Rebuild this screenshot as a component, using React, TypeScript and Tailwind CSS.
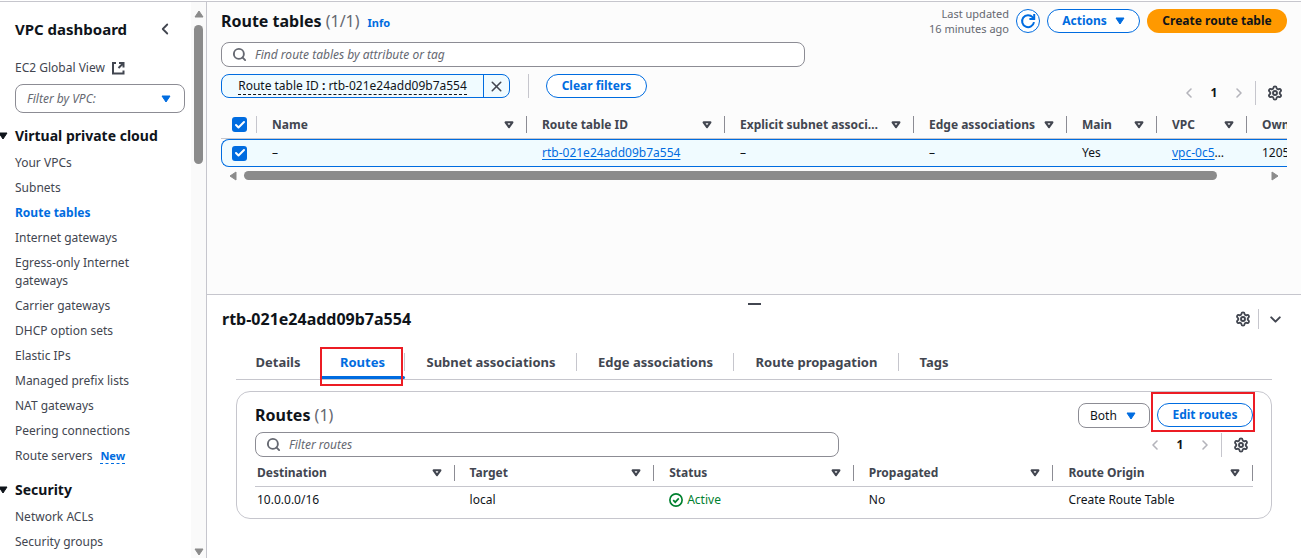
import { Settings, Search, X, ChevronLeft, ChevronRight, ChevronDown, Check } from "lucide-react";
import clsx from "clsx";

function Caret({ className }: { className?: string }) {
  return (
    <svg viewBox="0 0 10 8" className={clsx("h-2 w-2.5 shrink-0", className)} aria-hidden="true">
      <path d="M1 1h8L5 7z" fill="currentColor" stroke="currentColor" strokeLinejoin="round" />
    </svg>
  );
}

function SortIcon() {
  return (
    <svg viewBox="0 0 10 8" className="h-2 w-2.5 shrink-0" fill="none" aria-hidden="true">
      <path d="M1.6 1.3h6.8L5 6.2z" stroke="currentColor" strokeWidth="2.1" strokeLinejoin="round" />
    </svg>
  );
}

function ExternalIcon() {
  return (
    <svg viewBox="0 0 14 14" className="size-3.5" fill="none" stroke="currentColor" strokeWidth="2" aria-hidden="true">
      <path d="M5 2H2v10.5h10.5V9.5" />
      <path d="M8 2h4.5v4.5M12.5 2 7.5 7" />
    </svg>
  );
}

function RefreshIcon() {
  return (
    <svg viewBox="0 0 16 16" className="size-4" fill="none" stroke="currentColor" strokeWidth="2" aria-hidden="true">
      <path d="M14 9.2A6 6 0 1 1 12.6 4.2L14 5.6" />
      <path d="M14.2 1v5H9.4" />
    </svg>
  );
}

function StatusIcon() {
  return (
    <svg viewBox="0 0 16 16" className="size-3.5" fill="none" stroke="currentColor" strokeWidth="1.9" aria-hidden="true">
      <circle cx="8" cy="8" r="7" />
      <path d="m4.8 8.2 2.3 2.3 4.1-4.4" />
    </svg>
  );
}

function Pager() {
  return (
    <div className="flex h-6 items-center pr-1">
      <button aria-label="Previous page" className="flex w-4 justify-center text-[#b4b4bb]">
        <ChevronLeft className="size-4 shrink-0" strokeWidth={2.4} />
      </button>
      <button className="mx-[9px] w-4 text-center font-bold">1</button>
      <button aria-label="Next page" className="flex w-4 justify-center text-[#b4b4bb]">
        <ChevronRight className="size-4 shrink-0" strokeWidth={2.4} />
      </button>
      <span className="ml-2 h-6 w-px bg-[#c6c6cd]" />
      <button aria-label="Preferences" className="ml-[11px] flex w-4 justify-center text-[#424650]">
        <Settings className="size-4 shrink-0" strokeWidth={2.8} />
      </button>
    </div>
  );
}

function SearchBox({ label }: { label: string }) {
  return (
    <label className="flex h-[25px] w-full max-w-[584px] items-center gap-2 rounded-lg border border-[#8c8c94] bg-white pr-3 pl-2.5">
      <Search className="size-[15px] shrink-0 text-[#656871]" strokeWidth={3} />
      <input
        type="text"
        aria-label={label}
        placeholder={label}
        className="min-w-0 flex-1 bg-transparent outline-none placeholder:text-[#656871] placeholder:italic"
      />
    </label>
  );
}

function Tick({ label }: { label: string }) {
  return (
    <label className="ml-[11px] grid size-[15px] place-items-center">
      <input
        type="checkbox"
        defaultChecked
        aria-label={label}
        className="col-start-1 row-start-1 size-[15px] appearance-none rounded-[3px] bg-white checked:bg-[#006ce0]"
      />
      <Check className="pointer-events-none col-start-1 row-start-1 size-3 text-white" strokeWidth={4} />
    </label>
  );
}

type Item = { text: string; active?: boolean; isNew?: boolean };

function NavGroup({ title, items }: { title: string; items: Item[] }) {
  return (
    <section className="mb-4">
      <h3>
        <button className="flex items-center gap-[7px] text-[14px] leading-[18px] font-bold whitespace-nowrap">
          <Caret className="-ml-0.5" />
          {title}
        </button>
      </h3>
      <ul className="mt-[9px] flex flex-col gap-[7px] pr-12 pl-[15px]">
        {items.map((item) => (
          <li key={item.text}>
            <a href="#" className={item.active ? "font-bold text-[#006ce0]" : "text-[#424650]"}>
              {item.text}
            </a>
            {item.isNew && (
              <a href="#" className="ml-2 border-b border-dashed border-[#006ce0] text-[11px] font-bold text-[#006ce0]">
                New
              </a>
            )}
          </li>
        ))}
      </ul>
    </section>
  );
}

const vpcItems: Item[] = [
  { text: "Your VPCs" },
  { text: "Subnets" },
  { text: "Route tables", active: true },
  { text: "Internet gateways" },
  { text: "Egress-only Internet gateways" },
  { text: "Carrier gateways" },
  { text: "DHCP option sets" },
  { text: "Elastic IPs" },
  { text: "Managed prefix lists" },
  { text: "NAT gateways" },
  { text: "Peering connections" },
  { text: "Route servers", isNew: true },
];

const securityItems: Item[] = [{ text: "Network ACLs" }, { text: "Security groups" }];

function Sidebar() {
  return (
    <aside className="flex w-[207px] shrink-0 border-r border-[#c6c6cd]">
      <div className="min-w-0 flex-1 overflow-hidden pt-[17px]">
        <div className="flex items-center justify-between pr-[17px] pl-[15px]">
          <h2 className="text-[15px] leading-5 font-bold">VPC dashboard</h2>
          <button aria-label="Collapse navigation" className="text-[#424650]">
            <ChevronLeft className="size-[18px]" strokeWidth={2.4} />
          </button>
        </div>
        <a href="#" className="mt-5 flex items-center gap-1.5 pl-[15px] text-[#424650]">
          EC2 Global View <ExternalIcon />
        </a>
        <div className="mt-[7px] mb-3.5 grid pr-1.5 pl-[15px]">
          <select
            aria-label="Filter by VPC"
            className="col-start-1 row-start-1 h-[29px] appearance-none rounded-lg border border-[#8c8c94] bg-white px-[11px] text-[#656871] italic"
          >
            <option>Filter by VPC:</option>
          </select>
          <Caret className="pointer-events-none col-start-1 row-start-1 mr-3.5 self-center justify-self-end text-[#006ce0]" />
        </div>
        <NavGroup title="Virtual private cloud" items={vpcItems} />
        <NavGroup title="Security" items={securityItems} />
      </div>
      <div className="flex w-[15px] shrink-0 flex-col items-center bg-[#fafafa] pt-2 pb-0.5 text-[#8b8b8b]">
        <Caret className="rotate-180" />
        <div className="my-[7px] min-h-0 w-[9px] flex-1">
          <div className="h-[27%] rounded-full bg-[#8b8b8b]" />
        </div>
        <Caret />
      </div>
    </aside>
  );
}

const columns = ["Name", "Route table ID", "Explicit subnet associ…", "Edge associations", "Main", "VPC"];

function RouteTables() {
  return (
    <section className="min-h-0 flex-1 overflow-hidden bg-[#fcfcfc] pt-[7px] pr-3.5 pl-3.5">
      <div className="flex h-6 items-center justify-between">
        <div className="flex items-baseline">
          <h1 className="text-[16px] leading-6 font-bold">
            Route tables <span className="font-normal text-[#656871]">(1/1)</span>
          </h1>
          <a href="#" className="ml-2 text-[11px] font-bold text-[#006ce0]">
            Info
          </a>
        </div>
        <div className="flex items-center gap-[7px]">
          <p className="text-right text-[11px] leading-[15px] text-[#656871]">
            Last updated
            <br />
            16 minutes ago
          </p>
          <button
            aria-label="Refresh"
            className="grid size-6 place-items-center rounded-full border border-[#006ce0] bg-white text-[#006ce0]"
          >
            <RefreshIcon />
          </button>
          <button className="flex h-6 w-[93px] items-center justify-center gap-2 rounded-full border border-[#006ce0] bg-white font-bold text-[#006ce0]">
            Actions <Caret />
          </button>
          <button className="h-6 w-[140px] rounded-full bg-[#ff9900] font-bold">Create route table</button>
        </div>
      </div>

      <div className="mt-[9px]">
        <SearchBox label="Find route tables by attribute or tag" />
      </div>

      <div className="mt-[7px] flex h-[31px] items-start">
        <div className="flex h-6 w-[289px] items-center overflow-hidden rounded-lg border border-[#006ce0] bg-[#f0fbff]">
          <button className="flex h-full flex-1 items-center justify-center border-r border-[#006ce0]">
            <span className="border-b border-dashed border-[#0f141a] leading-[17px]">
              Route table ID <b>:</b> rtb-021e24add09b7a554
            </span>
          </button>
          <button aria-label="Remove filter" className="grid w-[25px] place-items-center text-[#424650]">
            <X className="size-[17px]" strokeWidth={2.2} />
          </button>
        </div>
        <span className="mr-[17px] ml-[18px] h-6 w-px bg-[#c6c6cd]" />
        <button className="h-6 w-[101px] rounded-full border border-[#006ce0] bg-white font-bold text-[#006ce0]">
          Clear filters
        </button>
        <div className="ml-auto self-end">
          <Pager />
        </div>
      </div>

      <div className="mt-1.5 overflow-hidden">
        <table className="w-[1130px] table-fixed border-separate border-spacing-0 text-left whitespace-nowrap">
          <colgroup>
            <col className="w-9" />
            <col className="w-[270px]" />
            <col className="w-[198px]" />
            <col className="w-[189px]" />
            <col className="w-[153px]" />
            <col className="w-[90px]" />
            <col className="w-[90px]" />
            <col />
          </colgroup>
          <thead className="text-[#424650]">
            <tr>
              <th className="h-7 border-b border-[#c6c6cd] p-0">
                <div className="flex h-[17px] items-center border-r border-[#c6c6cd]">
                  <Tick label="Select all route tables" />
                </div>
              </th>
              {columns.map((name) => (
                <th key={name} className="border-b border-[#c6c6cd] p-0">
                  <div className="flex h-[17px] items-center justify-between border-r border-[#8c8c94] pr-3 pl-[15px]">
                    {name}
                    <SortIcon />
                  </div>
                </th>
              ))}
              <th className="border-b border-[#c6c6cd] py-0 pr-0 pl-[15px]">Owner</th>
            </tr>
          </thead>
          <tbody>
            <tr className="bg-[#f0fbff] *:h-7 *:border-y *:border-[#006ce0] *:py-0 *:pr-0">
              <td className="rounded-l-lg border-l pl-0">
                <div className="-ml-px">
                  <Tick label="Select rtb-021e24add09b7a554" />
                </div>
              </td>
              <td className="pl-[15px]">–</td>
              <td className="pl-[15px]">
                <a href="#" className="text-[#006ce0] underline underline-offset-2">
                  rtb-021e24add09b7a554
                </a>
              </td>
              <td className="pl-[15px]">–</td>
              <td className="pl-[15px]">–</td>
              <td className="pl-[15px]">Yes</td>
              <td className="pl-[15px]">
                <a href="#" className="text-[#006ce0] underline underline-offset-2">
                  vpc-0c5
                </a>
                …
              </td>
              <td className="rounded-r-lg border-r pl-[15px]">1205</td>
            </tr>
          </tbody>
        </table>
      </div>

      <div className="mt-1 flex h-[9px] items-center gap-1.5 px-[7px] text-[#8b8b8b]">
        <Caret className="rotate-90" />
        <div className="h-full flex-1">
          <div className="h-full w-[95.4%] rounded-full bg-[#8b8b8b]" />
        </div>
        <Caret className="-rotate-90" />
      </div>
    </section>
  );
}

const tabs = [
  { name: "Details", width: "w-[84px]" },
  { name: "Routes", width: "w-[85px]" },
  { name: "Subnet associations", width: "w-[172px]" },
  { name: "Edge associations", width: "w-[157px]" },
  { name: "Route propagation", width: "w-[165px]" },
  { name: "Tags", width: "w-[70px]" },
];

const routeColumns = ["Destination", "Target", "Status", "Propagated", "Route Origin"];

function Details() {
  return (
    <section className="border-t border-[#c6c6cd] bg-white pt-2 pb-[39px]">
      <div className="mx-auto h-0.5 w-[13px] bg-[#424650]" />
      <div className="mt-1 flex h-5 items-center pr-[17px] pl-[15px]">
        <h2 className="flex-1 text-[16px] leading-5 font-bold">rtb-021e24add09b7a554</h2>
        <button aria-label="Panel preferences" className="text-[#424650]">
          <Settings className="size-4" strokeWidth={2.8} />
        </button>
        <span className="mr-2 ml-[7px] h-5 w-px bg-[#c6c6cd]" />
        <button aria-label="Close panel" className="text-[#424650]">
          <ChevronDown className="size-[17px]" strokeWidth={2.8} />
        </button>
      </div>

      <div className="px-[29px]">
        <div role="tablist" className="mt-[17px] flex h-[34px] border-b border-[#c6c6cd] text-[13px] font-bold">
          {tabs.map((tab, i) => (
            <button
              key={tab.name}
              role="tab"
              aria-selected={i === 1}
              className={clsx(
                "relative flex shrink-0 items-center justify-center pb-0.5 whitespace-nowrap",
                tab.width,
                i === 1 ? "text-[#006ce0]" : "text-[#424650]",
              )}
            >
              {tab.name}
              {i > 0 && i < tabs.length - 1 && <span className="absolute top-[7px] right-0 h-[18px] w-px bg-[#c6c6cd]" />}
              {i === 1 && (
                <>
                  <span className="absolute inset-x-0 bottom-0 h-[3px] rounded-full bg-[#006ce0]" />
                  <span className="absolute top-px right-0.5 -bottom-[7px] left-0 border-2 border-[#ec1c24]" />
                </>
              )}
            </button>
          ))}
        </div>

        <div className="mt-[11px] rounded-[14px] border border-[#c6c6cd] px-[18px] pt-[11px] pb-[5px]">
          <div className="flex h-[25px] items-start">
            <h3 className="flex-1 text-[16px] leading-6 font-bold">
              Routes <span className="font-normal text-[#656871]">(1)</span>
            </h3>
            <div className="mr-[7px] grid w-[72px]">
              <select
                aria-label="Route type"
                className="col-start-1 row-start-1 h-[25px] appearance-none rounded-lg border border-[#8c8c94] bg-white px-[11px]"
              >
                <option>Both</option>
              </select>
              <Caret className="pointer-events-none col-start-1 row-start-1 mr-3.5 self-center justify-self-end text-[#006ce0]" />
            </div>
            <button className="relative h-6 w-24 rounded-full border border-[#006ce0] bg-white font-bold text-[#006ce0]">
              Edit routes
              <span className="absolute -top-3 -right-[3px] -bottom-1.5 -left-[7px] border-2 border-[#ec1c24]" />
            </button>
          </div>

          <div className="mt-1 flex items-center justify-between">
            <SearchBox label="Filter routes" />
            <Pager />
          </div>

          <table className="mt-0.5 w-full table-fixed border-separate border-spacing-0 text-left">
            <thead className="text-[#424650]">
              <tr>
                {routeColumns.map((name, i) => (
                  <th key={name} className="h-7 border-b border-[#c6c6cd] p-0">
                    <div
                      className={clsx(
                        "flex h-4 items-center justify-between border-r border-[#8c8c94] pr-3",
                        i === 0 ? "pl-0.5" : "pl-[15px]",
                      )}
                    >
                      {name}
                      <SortIcon />
                    </div>
                  </th>
                ))}
              </tr>
            </thead>
            <tbody>
              <tr className="*:h-[26px] *:py-0 *:pr-0">
                <td className="pl-0.5">10.0.0.0/16</td>
                <td className="pl-[15px]">local</td>
                <td className="pl-[15px]">
                  <span className="flex items-center gap-1 text-[#00802f]">
                    <StatusIcon /> Active
                  </span>
                </td>
                <td className="pl-[15px]">No</td>
                <td className="pl-[15px]">Create Route Table</td>
              </tr>
            </tbody>
          </table>
        </div>
      </div>
    </section>
  );
}

export default function App() {
  return (
    <div className="flex h-screen flex-col bg-white pt-px font-['Noto_Sans',sans-serif] text-[12px] leading-[18px] text-[#0f141a]">
      <div className="flex min-h-0 flex-1 border-t border-[#c6c6cd]">
        <Sidebar />
        <main className="flex min-w-0 flex-1 flex-col">
          <RouteTables />
          <Details />
        </main>
      </div>
    </div>
  );
}
